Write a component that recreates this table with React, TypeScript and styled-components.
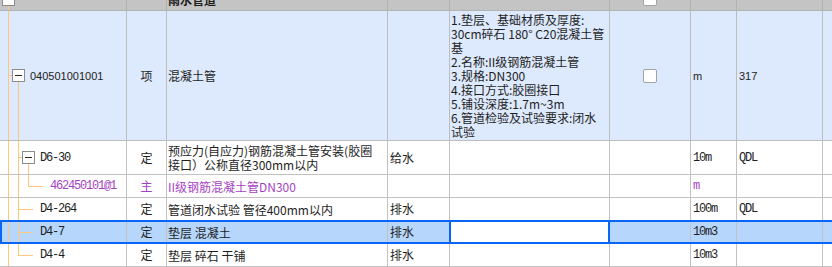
import styled, { createGlobalStyle, css } from "styled-components";

const GlobalStyle = createGlobalStyle`
  html, body {
    margin: 0;
    padding: 0;
    background: #ffffff;
  }
  body {
    font-family: "Noto Sans CJK SC", sans-serif;
    font-size: 12px;
    color: #1e1e1e;
  }
`;

const ORANGE = "#ffc77e";
const BLUE = "#0a64f5";
const COLS = "127px 40px 221px 62px 160px 81px 46px 86px 80px";

type RowKind = "group" | "bill" | "norm" | "selected";
type Guide = "pass" | "tee" | "ell";
type Font = "cjk" | "sans" | "mono";
type Tone = "ink" | "purple";

const rowBg: Record<RowKind, string> = {
  group: "#c4c4c4",
  bill: "#dde9fc",
  norm: "#ffffff",
  selected: "#b6d6fc",
};

const rowLine: Record<RowKind, string> = {
  group: "#b2b2b2",
  bill: "#bdbdbd",
  norm: "#c2c2c2",
  selected: "#c2c2c2",
};

const fonts: Record<Font, string> = {
  cjk: `font-family: "Noto Sans CJK SC", sans-serif; font-size: 12px;`,
  sans: `font-family: "Liberation Sans", "Noto Sans CJK SC", sans-serif; font-size: 11px;`,
  mono: `font-family: "Liberation Mono", "Noto Sans CJK SC", monospace; font-size: 12px; letter-spacing: -1.2px;`,
};

const Viewport = styled.div`
  width: 832px;
  height: 267px;
  overflow: hidden;
`;

// scrolled: the group row above is half out of view
const Table = styled.div`
  width: 903px;
  margin-top: -12px;
`;

const Row = styled.div<{ $kind: RowKind }>`
  --line: ${(p) => rowLine[p.$kind]};
  position: relative;
  display: grid;
  grid-template-columns: ${COLS};
  background: ${(p) => rowBg[p.$kind]};

  ${(p) =>
    p.$kind === "selected" &&
    css`
      &::after {
        content: "";
        position: absolute;
        left: 0;
        right: 0;
        top: -1px;
        bottom: 0;
        border: 2px solid ${BLUE};
        border-right: none;
        pointer-events: none;
      }
    `}
`;

const Cell = styled.div<{
  $center?: boolean;
  $font?: Font;
  $tone?: Tone;
  $bold?: boolean;
  $active?: boolean;
}>`
  position: relative;
  box-sizing: border-box;
  min-height: 23px;
  border-right: 1px solid var(--line);
  border-bottom: 1px solid var(--line);
  display: flex;
  align-items: center;
  justify-content: ${(p) => (p.$center ? "center" : "flex-start")};
  padding: 0 2px;
  line-height: 14px;
  white-space: nowrap;
  overflow: hidden;
  ${(p) => fonts[p.$font ?? "cjk"]}
  color: ${(p) => (p.$tone === "purple" ? "#a53fc4" : "#1e1e1e")};
  font-weight: ${(p) => (p.$bold ? 700 : 400)};

  ${(p) =>
    p.$active &&
    css`
      overflow: visible;
      background: #ffffff;
      &::after {
        content: "";
        position: absolute;
        top: -1px;
        bottom: -1px;
        left: -1px;
        right: -1px;
        border-left: 2px solid ${BLUE};
        border-right: 2px solid ${BLUE};
        pointer-events: none;
      }
    `}
`;

const TextBlock = styled(Cell)<{ $top?: number; $bottom?: number }>`
  padding: ${(p) => p.$top ?? 3}px 1px ${(p) => p.$bottom ?? 2}px;
  align-items: center;
`;

const Lines = styled.div`
  display: flex;
  flex-direction: column;
`;

const TreeCell = styled(Cell)`
  padding: 0;
  align-items: stretch;
`;

const vline = (height: string) =>
  `linear-gradient(${ORANGE}, ${ORANGE}) 8px 0 / 1px ${height} no-repeat`;
const hline = (x: number, w: number) =>
  `linear-gradient(${ORANGE}, ${ORANGE}) ${x}px 50% / ${w}px 1px no-repeat`;

const GuideCol = styled.span<{ $kind: Guide }>`
  flex: 0 0 10px;
  background: ${(p) =>
    p.$kind === "pass"
      ? vline("100%")
      : p.$kind === "tee"
      ? `${vline("100%")}, ${hline(8, 2)}`
      : `${vline("50%")}, ${hline(8, 2)}`};
`;

const Stub = styled.span<{ $branch: boolean; $child: boolean }>`
  flex: 0 0 15px;
  display: flex;
  align-items: center;
  background: ${(p) =>
    p.$branch
      ? `${p.$child ? hline(0, 2) + ", " : ""}linear-gradient(${ORANGE}, ${ORANGE}) 8px 100% / 1px 50% no-repeat`
      : hline(0, 13)};
`;

const Expander = styled.span`
  box-sizing: border-box;
  width: 13px;
  height: 13px;
  margin-left: 2px;
  border: 1px solid #8c8c8c;
  background: #ffffff;
  display: flex;
  align-items: center;
  justify-content: center;

  &::before {
    content: "";
    width: 7px;
    height: 1px;
    background: #2a2a2a;
  }
`;

const Label = styled.span`
  margin-left: 5px;
  align-self: center;
`;

const Check = styled.span`
  box-sizing: border-box;
  width: 14px;
  height: 14px;
  border: 1px solid #a3a3a3;
  border-radius: 2px;
  background: #ffffff;
`;

type Item = {
  kind: RowKind;
  guides: Guide[];
  branch: boolean;
  code: string;
  type: string;
  name: string[];
  spec: string;
  feature: string[];
  check: boolean;
  unit: string;
  qty: string;
  tone?: Tone;
  active?: boolean;
};

const items: Item[] = [
  {
    kind: "group",
    guides: [],
    branch: true,
    code: "",
    type: "",
    name: ["雨水管道"],
    spec: "",
    feature: [],
    check: true,
    unit: "",
    qty: "",
  },
  {
    kind: "bill",
    guides: ["tee"],
    branch: true,
    code: "040501001001",
    type: "项",
    name: ["混凝土管"],
    spec: "",
    feature: [
      "1.垫层、基础材质及厚度:",
      "30cm碎石 180° C20混凝土管",
      "基",
      "2.名称:II级钢筋混凝土管",
      "3.规格:DN300",
      "4.接口方式:胶圈接口",
      "5.铺设深度:1.7m~3m",
      "6.管道检验及试验要求:闭水",
      "试验",
    ],
    check: true,
    unit: "m",
    qty: "317",
  },
  {
    kind: "norm",
    guides: ["pass", "tee"],
    branch: true,
    code: "D6-30",
    type: "定",
    name: ["预应力(自应力)钢筋混凝土管安装(胶圈", "接口）公称直径300mm以内"],
    spec: "给水",
    feature: [],
    check: false,
    unit: "10m",
    qty: "QDL",
  },
  {
    kind: "norm",
    guides: ["pass", "pass", "ell"],
    branch: false,
    code: "462450101@1",
    type: "主",
    name: ["II级钢筋混凝土管DN300"],
    spec: "",
    feature: [],
    check: false,
    unit: "m",
    qty: "",
    tone: "purple",
  },
  {
    kind: "norm",
    guides: ["pass", "tee"],
    branch: false,
    code: "D4-264",
    type: "定",
    name: ["管道闭水试验 管径400mm以内"],
    spec: "排水",
    feature: [],
    check: false,
    unit: "100m",
    qty: "QDL",
  },
  {
    kind: "selected",
    guides: ["pass", "tee"],
    branch: false,
    code: "D4-7",
    type: "定",
    name: ["垫层 混凝土"],
    spec: "排水",
    feature: [],
    check: false,
    unit: "10m3",
    qty: "",
    active: true,
  },
  {
    kind: "norm",
    guides: ["pass", "ell"],
    branch: false,
    code: "D4-4",
    type: "定",
    name: ["垫层 碎石 干铺"],
    spec: "排水",
    feature: [],
    check: false,
    unit: "10m3",
    qty: "",
  },
];

function BillRow({ item, index }: { item: Item; index: number }) {
  const latin: Font = item.kind === "bill" ? "sans" : "mono";
  const hasChild = index < items.length - 1 && item.branch;
  return (
    <Row $kind={item.kind}>
      <TreeCell $font={latin} $tone={item.tone}>
        {item.guides.map((g, i) => (
          <GuideCol key={i} $kind={g} />
        ))}
        <Stub $branch={item.branch} $child={item.guides.length > 0}>
          {hasChild && <Expander />}
        </Stub>
        <Label>{item.code}</Label>
      </TreeCell>
      <Cell $center $tone={item.tone}>
        {item.type}
      </Cell>
      <TextBlock $tone={item.tone} $bold={item.kind === "group"}>
        <Lines>
          {item.name.map((l) => (
            <span key={l}>{l}</span>
          ))}
        </Lines>
      </TextBlock>
      <Cell $tone={item.tone}>{item.spec}</Cell>
      <TextBlock $top={2} $bottom={1} $active={item.active}>
        <Lines>
          {item.feature.map((l) => (
            <span key={l}>{l}</span>
          ))}
        </Lines>
      </TextBlock>
      <Cell $center>{item.check && <Check />}</Cell>
      <Cell $font={latin} $tone={item.tone}>
        {item.unit}
      </Cell>
      <Cell $font={latin}>{item.qty}</Cell>
      <Cell />
    </Row>
  );
}

export default function App(): JSX.Element {
  return (
    <>
      <GlobalStyle />
      <Viewport>
        <Table>
          {items.map((item, i) => (
            <BillRow key={i} item={item} index={i} />
          ))}
        </Table>
      </Viewport>
    </>
  );
}
